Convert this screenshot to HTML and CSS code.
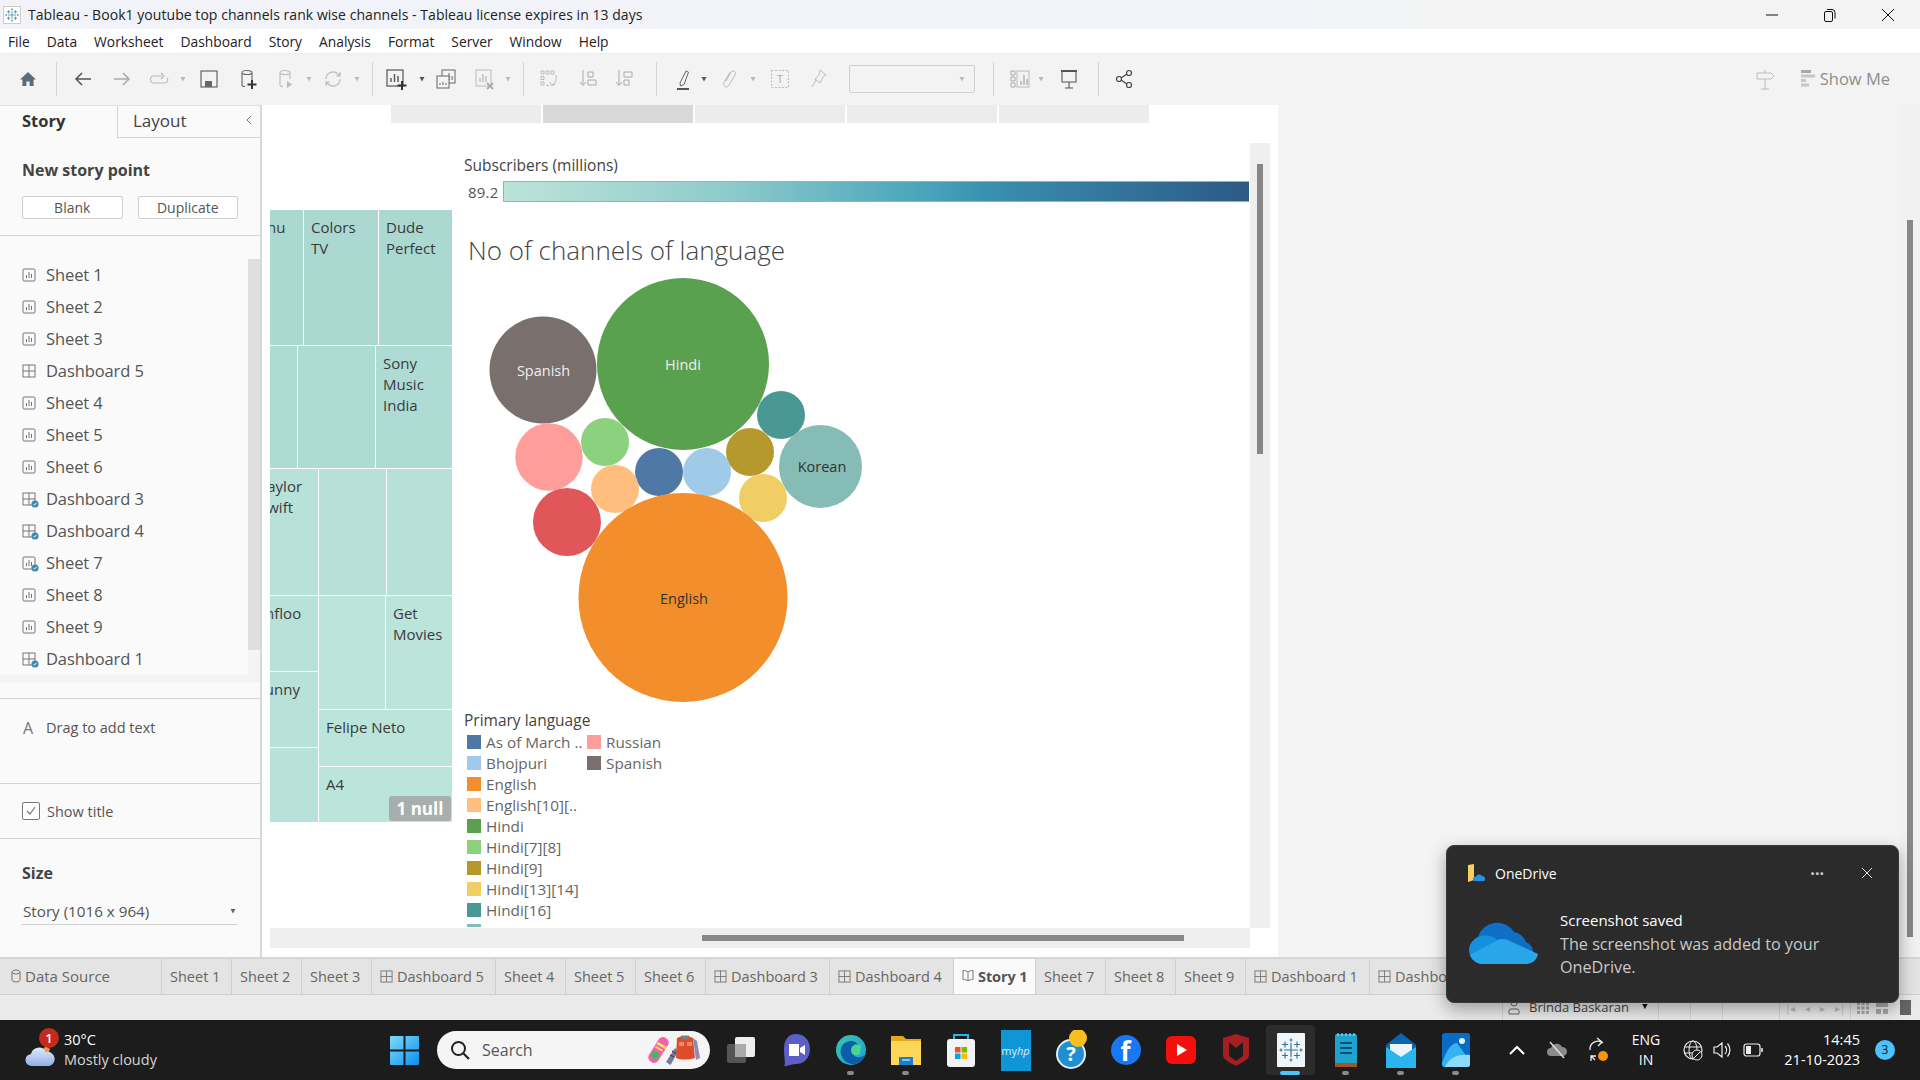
FILE: index.html
```html
<!DOCTYPE html>
<html lang="en">
<head>
  <meta charset="UTF-8">
  <title>Tableau - Book1 youtube top channels rank wise channels</title>
  <link rel="stylesheet" href="styles.css">
</head>
<body>
  <svg class="defs" width="0" height="0">
    <symbol id="i-sheet" viewBox="0 0 14 14"><rect x="1" y="1" width="12" height="12" rx="1" fill="none" stroke="#777"/><path d="M4.5 10V7M7 10V4M9.5 10V6" stroke="#777" fill="none"/></symbol>
    <symbol id="i-dash" viewBox="0 0 14 14"><rect x="1" y="1" width="12" height="12" fill="none" stroke="#777"/><path d="M7 1v12M1 7h12" stroke="#777"/></symbol>
    <symbol id="i-ok" viewBox="0 0 8 8"><circle cx="4" cy="4" r="3.6" fill="#3f87ab"/><path d="M2.3 4l1.2 1.2 2.2-2.4" stroke="#fff" fill="none"/></symbol>
    <symbol id="i-tableau" viewBox="0 0 28 28"><path d="M14 7v14M7 14h14M14 2.500v3M12.500 4h3M14 22.500v3M12.500 24h3M2.500 14h3M4 12.500v3M22.500 14h3M24 12.500v3M8 5.500v6M5 8.500h6M20 5.500v6M17 8.500h6M8 16.500v6M5 19.500h6M20 16.500v6M17 19.500h6" stroke="#35759c" stroke-width="1.200" fill="none"/></symbol>
  </svg>

  <div class="app">
    <div class="titlebar">
      <svg class="app-icon" width="18" height="18" viewBox="0 0 18 18"><rect x=".5" y=".5" width="17" height="17" fill="#fff" stroke="#ccc"/><svg x="1" y="1" width="16" height="16"><use href="#i-tableau"/></svg></svg>
      <span class="title-text">Tableau - Book1 youtube top channels rank wise channels - Tableau license expires in 13 days</span>
      <div class="win-btns">
        <svg width="14" height="14" viewBox="0 0 14 14"><path d="M1 7h12" stroke="#111"/></svg>
        <svg width="14" height="14" viewBox="0 0 14 14"><rect x="1.5" y="3.5" width="8" height="10" rx="1.5" fill="none" stroke="#111"/><path d="M4 1.5h5a3 3 0 0 1 3 3v6" fill="none" stroke="#111"/></svg>
        <svg width="14" height="14" viewBox="0 0 14 14"><path d="M1 1l12 12M13 1L1 13" stroke="#111"/></svg>
      </div>
    </div>

    <div class="menubar">
      <span>File</span><span>Data</span><span>Worksheet</span><span>Dashboard</span><span>Story</span><span>Analysis</span><span>Format</span><span>Server</span><span>Window</span><span>Help</span>
    </div>

    <div class="toolbar">
      <svg class="tb m16" viewBox="0 0 24 24"><path d="M12 5L4 12.5h2.4V19h4v-4.5h3.200V19h4v-6.500H20z" fill="#5c6b7a"/></svg>
      <i class="sep m16"></i>
      <svg class="tb m14" viewBox="0 0 24 24"><path d="M20 12H5M11 6l-6 6 6 6" stroke="#555" stroke-width="1.500" fill="none"/></svg>
      <svg class="tb m15" viewBox="0 0 24 24"><path d="M4 12h15M13 6l6 6-6 6" stroke="#aaa" stroke-width="1.500" fill="none"/></svg>
      <svg class="tb m13" viewBox="0 0 24 24"><path d="M15 9H7a3.500 3.500 0 0 0 0 7h11a3 3 0 0 0 2-5M14 6l3 3-3 3" stroke="#bbb" stroke-width="1.200" fill="none"/></svg>
      <i class="dd light m8"></i>
      <svg class="tb m10" viewBox="0 0 24 24"><rect x="4" y="4" width="16" height="16" fill="none" stroke="#666" stroke-width="1.200"/><rect x="8" y="14" width="7" height="6" fill="#666"/></svg>
      <svg class="tb m15" viewBox="0 0 24 24"><path d="M6 5.500a5 2 0 0 1 10 0V15M6 5.500V18c0 1 1.500 1.500 3 1.500M6 5.500a5 2 0 0 0 10 0" stroke="#666" stroke-width="1.100" fill="none"/><path d="M16 13v9M11.500 17.500h9" stroke="#333" stroke-width="2"/></svg>
      <svg class="tb m14" viewBox="0 0 24 24"><path d="M6 5.500a5 2 0 0 1 10 0V12M6 5.500V18c0 1 1.500 1.500 3 1.500M6 5.500a5 2 0 0 0 10 0" stroke="#bbb" stroke-width="1.100" fill="none"/><path d="M13 14v7l5-3.500z" fill="#bbb"/></svg>
      <i class="dd light m7"></i>
      <svg class="tb m8" viewBox="0 0 24 24"><path d="M5 12a7 7 0 0 1 12-5l2 2M19 12a7 7 0 0 1-12 5l-2-2M19 5v4h-4M5 19v-4h4" stroke="#bbb" stroke-width="1.200" fill="none"/></svg>
      <i class="dd light m8"></i>
      <i class="sep m11"></i>
      <svg class="tb m11" viewBox="0 0 24 24"><rect x="3" y="3" width="16" height="16" fill="none" stroke="#555" stroke-width="1.200"/><path d="M7 15v-4M10.500 15V7M14 15v-6" stroke="#555" stroke-width="1.400"/><path d="M18 14v9M13.500 18.500h9" stroke="#333" stroke-width="2"/></svg>
      <i class="dd m10"></i>
      <svg class="tb m8" viewBox="0 0 24 24"><rect x="8" y="3" width="13" height="13" fill="#f3f3f3" stroke="#666"/><path d="M12 13v-3M15 13V6M18 13V9" stroke="#666"/><rect x="3" y="9" width="12" height="12" fill="#f3f3f3" stroke="#666"/><path d="M6 18v-2M9 18v-3M12 18v-2" stroke="#666"/></svg>
      <svg class="tb m14" viewBox="0 0 24 24"><rect x="4" y="3" width="15" height="16" fill="none" stroke="#bbb"/><path d="M8 15v-4M11 15V7M14 15v-6" stroke="#bbb" stroke-width="1.300"/><path d="M15 16l6 6M21 16l-6 6" stroke="#aaa" stroke-width="1.800"/></svg>
      <i class="dd light m8"></i>
      <i class="sep m11"></i>
      <svg class="tb m13" viewBox="0 0 24 24"><path d="M4 4h3v3H4zM9 4h3v3H9zM14 4h3v3h-3zM4 9.500h3v3H4zM4 15h3v3H4zM9 18.500h3M19 8v5a6 6 0 0 1-4 5M13 15l1.500 3.500 3.500-1" stroke="#bbb" fill="none"/></svg>
      <svg class="tb m15" viewBox="0 0 24 24"><path d="M7 3v15M4 15l3 3.500 3-3.500M12 5h5v5h-5zM12 13h8v5h-8z" stroke="#aaa" fill="none"/></svg>
      <svg class="tb m12" viewBox="0 0 24 24"><path d="M7 3v15M4 15l3 3.500 3-3.500M12 5h8v5h-8zM12 13h5v5h-5z" stroke="#aaa" fill="none"/></svg>
      <i class="sep m20"></i>
      <svg class="tb m14" viewBox="0 0 24 24"><path d="M9 16l6-12 2.500 1.200-4.500 12.300-3.500 1.500z" fill="none" stroke="#666"/><path d="M6 22h12" stroke="#555" stroke-width="2"/></svg>
      <i class="dd m5"></i>
      <svg class="tb m9" viewBox="0 0 24 24"><path d="M9 14l5-9a2.500 2.500 0 0 1 4.300 2.500l-6.500 11a2.800 2.800 0 0 1-5-2.500l6-10.500" fill="none" stroke="#bbb"/></svg>
      <i class="dd light m8"></i>
      <svg class="tb m11" viewBox="0 0 24 24"><rect x="3.500" y="3.500" width="17" height="17" fill="none" stroke="#bbb" stroke-dasharray="2 1.500"/><text x="12" y="16" text-anchor="middle" class="tb-t">T</text></svg>
      <svg class="tb m14" viewBox="0 0 24 24"><path d="M14 3l6 5-3 2-3 6-5-4 4-4zM10 13l-4 7" fill="none" stroke="#bbb"/></svg>
      <div class="combo m19"><i class="dd light"></i></div>
      <i class="sep m18"></i>
      <svg class="tb m14" viewBox="0 0 24 24"><rect x="9" y="4" width="12" height="16" fill="none" stroke="#bbb"/><path d="M13 18v-4M16 18V8M19 18v-6" stroke="#aaa" stroke-width="1.300"/><path d="M3 4h4v4H3zM3 10h4v4H3zM3 16h4v4H3z" fill="none" stroke="#aaa"/></svg>
      <i class="dd light m5"></i>
      <svg class="tb m12" viewBox="0 0 24 24"><path d="M4 4h16" stroke="#555" stroke-width="2"/><path d="M5 5v10h14V5M12 15v6M8 21h8" stroke="#555" fill="none" stroke-width="1.100"/></svg>
      <i class="sep m17"></i>
      <svg class="tb m13" viewBox="0 0 24 24"><circle cx="17" cy="6" r="2.500" fill="none" stroke="#444" stroke-width="1.200"/><circle cx="7" cy="12" r="2.500" fill="none" stroke="#444" stroke-width="1.200"/><circle cx="17" cy="18" r="2.500" fill="none" stroke="#444" stroke-width="1.200"/><path d="M9 11l6-4M9 13l6 4" stroke="#444" stroke-width="1.200"/></svg>
      <div class="showme">
        <svg width="24" height="24" viewBox="0 0 24 24"><path d="M4 6h14l3 3-3 3H4zM12 3v3M12 12v10M8 22h8" fill="none" stroke="#bbb"/></svg>
        <svg class="showme-bars" width="14" height="20" viewBox="0 0 14 20"><path d="M0 1h10v3H0z" fill="#aaa"/><path d="M0 5.500h14v3H0zM0 10h5v3H0zM0 14.500h8v3H0z" fill="#c6c6c6"/></svg>
        <span>Show Me</span>
      </div>
    </div>

    <div class="main">
      <aside class="side">
        <div class="side-tabs">
          <div class="side-tab on">Story</div>
          <div class="side-tab">Layout<svg class="chev" width="8" height="10" viewBox="0 0 8 10"><path d="M6 1L2 5l4 4" fill="none" stroke="#777"/></svg></div>
        </div>
        <div class="new-point">
          <h3>New story point</h3>
          <div class="new-btns"><button>Blank</button><button>Duplicate</button></div>
        </div>
        <div class="sheet-wrap">
          <ul class="sheets">
            <li><svg class="ico"><use href="#i-sheet"/></svg>Sheet 1</li>
            <li><svg class="ico"><use href="#i-sheet"/></svg>Sheet 2</li>
            <li><svg class="ico"><use href="#i-sheet"/></svg>Sheet 3</li>
            <li><svg class="ico"><use href="#i-dash"/></svg>Dashboard 5</li>
            <li><svg class="ico"><use href="#i-sheet"/></svg>Sheet 4</li>
            <li><svg class="ico"><use href="#i-sheet"/></svg>Sheet 5</li>
            <li><svg class="ico"><use href="#i-sheet"/></svg>Sheet 6</li>
            <li><svg class="ico"><use href="#i-dash"/></svg><svg class="ok"><use href="#i-ok"/></svg>Dashboard 3</li>
            <li><svg class="ico"><use href="#i-dash"/></svg><svg class="ok"><use href="#i-ok"/></svg>Dashboard 4</li>
            <li><svg class="ico"><use href="#i-sheet"/></svg><svg class="ok"><use href="#i-ok"/></svg>Sheet 7</li>
            <li><svg class="ico"><use href="#i-sheet"/></svg>Sheet 8</li>
            <li><svg class="ico"><use href="#i-sheet"/></svg>Sheet 9</li>
            <li><svg class="ico"><use href="#i-dash"/></svg><svg class="ok"><use href="#i-ok"/></svg>Dashboard 1</li>
          </ul>
          <div class="sheet-track"><div class="sheet-thumb"></div></div>
        </div>
        <div class="side-sec drag"><b>A</b>Drag to add text</div>
        <div class="side-sec showtitle">
          <svg width="18" height="18" viewBox="0 0 18 18"><rect x=".5" y=".5" width="17" height="17" rx="1.500" fill="#fff" stroke="#777"/><path d="M5 9l3 3 5-7" fill="none" stroke="#777" stroke-width="1.200"/></svg>
          Show title
        </div>
        <div class="size">
          <h3>Size</h3>
          <div class="size-sel">Story (1016 x 964)<i class="dd dark"></i></div>
        </div>
      </aside>

      <section class="canvas">
        <div class="points"><div></div><div class="cur"></div><div></div><div></div><div></div></div>
        <div class="scroller">
          <div class="view">
            <div class="tree">
              <div class="t-row r1">
                <div class="cell c1a"><span class="cut cut-nu">Vishnu</span></div>
                <div class="cell c1b">Colors<br>TV</div>
                <div class="cell c1c">Dude<br>Perfect</div>
              </div>
              <div class="t-row r2">
                <div class="cell c2a"></div>
                <div class="cell c2b"></div>
                <div class="cell c2c">Sony<br>Music<br>India</div>
              </div>
              <div class="t-row r3">
                <div class="t-col left">
                  <div class="cell l1"><span class="cut cut-ta">Taylor<br>Swift</span></div>
                  <div class="cell l2"><span class="cut cut-nf">Ninfloo</span></div>
                  <div class="cell l3"><span class="cut cut-un">Bad Bunny</span></div>
                  <div class="cell l4"></div>
                </div>
                <div class="t-col rest">
                  <div class="t-row m1"><div class="cell m1a"></div><div class="cell m1b"></div></div>
                  <div class="t-row m2"><div class="cell m2a"></div><div class="cell m2b">Get<br>Movies</div></div>
                  <div class="cell m3">Felipe Neto</div>
                  <div class="cell m4">A4<div class="nulls">1 null</div></div>
                </div>
              </div>
            </div>

            <div class="charts">
              <div class="color-leg">
                <div class="leg-title">Subscribers (millions)</div>
                <div class="color-row"><span>89.2</span><div class="ramp"></div></div>
              </div>
              <h2 class="chart-title">No of channels of language</h2>
              <svg class="bubbles" width="420" height="440" viewBox="464 270 420 440">
                <circle cx="683" cy="364" r="86" fill="#59a14f"/>
                <circle cx="543" cy="370" r="53.500" fill="#79706e"/>
                <circle cx="549" cy="457" r="33.700" fill="#ff9d9a"/>
                <circle cx="605" cy="442" r="24" fill="#8cd17d"/>
                <circle cx="781" cy="415" r="24" fill="#499894"/>
                <circle cx="820.500" cy="466.500" r="41.500" fill="#86bcb6"/>
                <circle cx="750" cy="452" r="24" fill="#b6992d"/>
                <circle cx="763" cy="498" r="24" fill="#f1ce63"/>
                <circle cx="659" cy="472" r="24" fill="#4e79a7"/>
                <circle cx="707" cy="472" r="24" fill="#a0cbe8"/>
                <circle cx="615" cy="489" r="24" fill="#ffbe7d"/>
                <circle cx="567" cy="522" r="34" fill="#e15759"/>
                <circle cx="683" cy="597.500" r="104.500" fill="#f28e2b"/>
                <text x="683" y="370" class="lbl lt">Hindi</text>
                <text x="543.500" y="376" class="lbl lt">Spanish</text>
                <text x="684" y="604" class="lbl">English</text>
                <text x="822" y="472" class="lbl">Korean</text>
              </svg>
              <div class="leg-title lang-title">Primary language</div>
              <div class="lang-leg">
                <div class="lang-col">
                  <div class="lang"><i class="c-blue"></i>As of March ..</div>
                  <div class="lang"><i class="c-sky"></i>Bhojpuri</div>
                  <div class="lang"><i class="c-orange"></i>English</div>
                  <div class="lang"><i class="c-peach"></i>English[10][..</div>
                  <div class="lang"><i class="c-green"></i>Hindi</div>
                  <div class="lang"><i class="c-lime"></i>Hindi[7][8]</div>
                  <div class="lang"><i class="c-olive"></i>Hindi[9]</div>
                  <div class="lang"><i class="c-yellow"></i>Hindi[13][14]</div>
                  <div class="lang"><i class="c-teal"></i>Hindi[16]</div>
                  <div class="lang"><i class="c-korean"></i>Korean</div>
                </div>
                <div class="lang-col">
                  <div class="lang"><i class="c-pink"></i>Russian</div>
                  <div class="lang"><i class="c-grey"></i>Spanish</div>
                </div>
              </div>
            </div>
          </div>
          <div class="vscroll"><div class="vthumb"></div></div>
          <div class="hscroll"><div class="hthumb"></div></div>
        </div>
      </section>

      <div class="outside"><div class="page-track"><div class="page-thumb"></div></div></div>
    </div>

    <div class="tabs">
      <div class="tab t-src"><svg width="10" height="14" viewBox="0 0 10 14"><path d="M1 3a4 2 0 0 1 8 0v8a4 2 0 0 1-8 0zM1 3a4 2 0 0 0 8 0" fill="none" stroke="#777"/></svg>Data Source</div>
      <div class="tab t-s">Sheet 1</div>
      <div class="tab t-s">Sheet 2</div>
      <div class="tab t-s">Sheet 3</div>
      <div class="tab t-d"><svg class="ico-s"><use href="#i-dash"/></svg>Dashboard 5</div>
      <div class="tab t-s">Sheet 4</div>
      <div class="tab t-s">Sheet 5</div>
      <div class="tab t-s">Sheet 6</div>
      <div class="tab t-d"><svg class="ico-s"><use href="#i-dash"/></svg>Dashboard 3</div>
      <div class="tab t-d"><svg class="ico-s"><use href="#i-dash"/></svg>Dashboard 4</div>
      <div class="tab t-story"><svg width="12" height="14" viewBox="0 0 12 14"><path d="M1 1.500c2 0 4 .5 5 1.500 1-1 3-1.500 5-1.500v9c-2 0-4 .5-5 1.500-1-1-3-1.500-5-1.500zM6 3v9" fill="none" stroke="#777"/></svg>Story 1</div>
      <div class="tab t-s">Sheet 7</div>
      <div class="tab t-s">Sheet 8</div>
      <div class="tab t-s">Sheet 9</div>
      <div class="tab t-d"><svg class="ico-s"><use href="#i-dash"/></svg>Dashboard 1</div>
      <div class="tab t-d"><svg class="ico-s"><use href="#i-dash"/></svg>Dashboard 2</div>
    </div>

    <div class="status">
      <div class="st-user"><svg width="12" height="16" viewBox="0 0 12 16"><circle cx="6" cy="4" r="3" fill="none" stroke="#666"/><path d="M1 15v-3a2 2 0 0 1 2-2h6a2 2 0 0 1 2 2v3z" fill="none" stroke="#666"/></svg>Brinda Baskaran<i class="dd black"></i></div>
      <div class="st-cell c32"></div>
      <div class="st-cell c32"></div>
      <div class="st-cell c57"></div>
      <div class="st-nav"><span>|◂</span><span>◂</span><span>▸</span><span>▸|</span></div>
      <div class="st-views">
        <svg width="12" height="12" viewBox="0 0 12 12"><path d="M0 0h3v3H0zM4.500 0h3v3h-3zM9 0h3v3H9zM0 4.500h3v3H0zM4.500 4.500h3v3h-3zM9 4.500h3v3H9zM0 9h3v3H0zM4.500 9h3v3h-3zM9 9h3v3H9z" fill="#aaa"/></svg>
        <svg width="12" height="12" viewBox="0 0 12 12"><path d="M0 0h12v5H0zM0 7h5v5H0zM7 7h5v5H7z" fill="#aaa"/></svg>
        <div class="view-solid"></div>
      </div>
    </div>

    <div class="taskbar">
      <div class="weather">
        <svg width="30" height="24" viewBox="0 0 30 24" class="w-cloud"><defs><linearGradient id="wc" x1="0" y1="0" x2="0" y2="1"><stop offset="0" stop-color="#dfe9fa"/><stop offset="1" stop-color="#8fb0e8"/></linearGradient></defs><path d="M18 6l3-3 4 3-2 5z" fill="#f29a2e"/><path d="M7 23a6 6 0 0 1-1-12 8 8 0 0 1 15-2 6.500 6.500 0 0 1 3 14z" fill="url(#wc)"/></svg>
        <span class="w-badge">1</span>
        <div class="w-text"><div>30°C</div><div class="w-sub">Mostly cloudy</div></div>
      </div>
      <svg class="win" width="29" height="29" viewBox="0 0 29 29"><defs><linearGradient id="wl" x1="0" y1="0" x2="1" y2="1"><stop offset="0" stop-color="#7bdcfb"/><stop offset="1" stop-color="#0f8ef0"/></linearGradient></defs><path d="M0 1a1 1 0 0 1 1-1h12.500v13.500H0zM15.500 0H28a1 1 0 0 1 1 1v12.500H15.500zM0 15.500h13.500V29H1a1 1 0 0 1-1-1zM15.500 15.500H29V28a1 1 0 0 1-1 1H15.500z" fill="url(#wl)"/></svg>
      <div class="search">
        <svg width="22" height="22" viewBox="0 0 22 22"><circle cx="9.500" cy="9.500" r="6.500" fill="none" stroke="#222" stroke-width="2"/><path d="M14.500 14.500L20 20" stroke="#222" stroke-width="2.200"/></svg>
        <span>Search</span>
        <svg class="promo" width="56" height="34" viewBox="0 0 56 34">
          <rect x="7" y="3" width="11" height="28" rx="5" transform="rotate(32 12.500 17)" fill="#f45fb0"/>
          <path d="M12 9l9 5-1.500 2.200-9-5zM10 13l7 4-1 1.600-7-4z" fill="#f5e35f"/>
          <circle cx="9" cy="22" r="3.800" fill="#35c25a"/>
          <path d="M20 29l9-14 3.500 3-8 14z" fill="#75799b"/>
          <path d="M24 22l4 2M26 18l4 2.500" stroke="#3e4160" stroke-width="1.200"/>
          <path d="M31 5l5-2h6l5 2 2 20c-6 2-14 2-19 0z" fill="#dc4d2b"/>
          <path d="M35 2.500h8l-1.500 4h-5z" fill="#76808f"/>
          <path d="M33 9h5v4h-5zM41 9h5v4h-5z" fill="#f08a5a"/>
          <path d="M47 5l4 3 3 17-4 2z" fill="#8a8fb0"/>
        </svg>
      </div>

      <div class="apps">
        <div class="app-i"><svg width="32" height="32" viewBox="0 0 32 32"><rect x="2" y="10" width="19" height="19" rx="2" fill="#555"/><rect x="10" y="3" width="20" height="20" rx="2" fill="#eee"/><rect x="10" y="10" width="11" height="13" fill="#aaa"/></svg></div>
        <div class="app-i"><svg width="30" height="34" viewBox="0 0 30 34"><path d="M15 1c8 0 14 6 14 15s-6 15-14 15c-3 0-8 2-12 2 2-2 0-8 0-17C3 7 7 1 15 1z" fill="#5b5fc7"/><path d="M8 11h10v12H8zM19 15l5-3v10l-5-3z" fill="#fff"/></svg></div>
        <div class="app-i dot"><svg width="32" height="34" viewBox="0 0 32 34"><defs><linearGradient id="eg" x1="0" y1="0" x2="1" y2="1"><stop offset="0" stop-color="#36c7a8"/><stop offset="1" stop-color="#1b9de2"/></linearGradient></defs><circle cx="16" cy="17" r="15" fill="url(#eg)"/><path d="M31 18c0 5-5 7-9 6-4-1-6-5-4-9 1-2 4-3 5-3-2-4-7-5-11-3C6 11 4 18 7 24c3 7 12 9 18 5 3-2 5-6 6-11z" fill="#0d5ca8"/><path d="M25 21c-4 3-9 1-9-4s6-7 10-4" fill="#4ad48f"/></svg></div>
        <div class="app-i dot"><svg width="30" height="34" viewBox="0 0 30 34"><path d="M0 3h12l3 3h15v26H0z" fill="#e6a817"/><path d="M0 8h30v24H0z" fill="#fdd75a"/><path d="M8 24h14v8H8z" fill="#1a7fc9"/><path d="M11 27h8" stroke="#fff"/></svg></div>
        <div class="app-i"><svg width="30" height="36" viewBox="0 0 30 36"><path d="M8 8V3h14v5" fill="none" stroke="#2ab4e6" stroke-width="2"/><rect x="1" y="7" width="28" height="28" rx="3" fill="#f4f4f4"/><path d="M9 15h5.500v5.500H9z" fill="#f25022"/><path d="M15.500 15H21v5.500h-5.500z" fill="#7fba00"/><path d="M9 21.500h5.500V27H9z" fill="#00a4ef"/><path d="M15.500 21.500H21V27h-5.500z" fill="#ffb900"/></svg></div>
        <div class="app-i"><div class="myhp">my<em>hp</em></div></div>
        <div class="app-i"><svg class="help" width="34" height="40" viewBox="0 0 34 40"><circle cx="15" cy="24" r="14" fill="#1e8fd0" stroke="#dfeef7" stroke-width="2"/><text x="15" y="31" text-anchor="middle" class="help-q">?</text><circle cx="22" cy="8" r="9" fill="#f9bf1c"/></svg></div>
        <div class="app-i"><div class="fb">f</div></div>
        <div class="app-i"><svg width="32" height="30" viewBox="0 0 32 30"><rect x="1" y="1" width="30" height="28" rx="6" fill="#f40f0f"/><path d="M12 9l10 6-10 6z" fill="#fff"/></svg></div>
        <div class="app-i"><svg width="28" height="34" viewBox="0 0 28 34"><path d="M1 5l13-4 13 4v17c0 5-8 8-13 11C9 30 1 27 1 22z" fill="#a41e22"/><path d="M7 9l7 6 7-6v14l-7 5-7-5z" fill="#1c1c1c"/></svg></div>
        <div class="app-i active"><svg width="28" height="34" viewBox="0 0 28 34"><rect width="28" height="34" rx="1" fill="#f3f6f8"/><svg y="3" width="28" height="28"><use href="#i-tableau"/></svg></svg></div>
        <div class="app-i dot"><svg width="24" height="36" viewBox="0 0 24 36"><rect x="1" y="2" width="22" height="32" rx="2" fill="#1da3cc"/><path d="M1 31h22v4H1z" fill="#a4541e"/><path d="M4 1v3M8 1v3M12 1v3M16 1v3M20 1v3" stroke="#bfe6f2"/><path d="M6 11h12M6 16h12M6 21h12" stroke="#0b4f78" stroke-width="2"/></svg></div>
        <div class="app-i dot"><svg width="30" height="36" viewBox="0 0 30 36"><path d="M0 13L15 1l15 12v22H0z" fill="#0a64b4"/><path d="M4 12h22v14H4z" fill="#e9f4fb"/><path d="M0 15l15 10 15-10v21H0z" fill="#29b6ef"/></svg></div>
        <div class="app-i dot"><svg width="28" height="34" viewBox="0 0 28 34"><rect width="28" height="34" rx="3" fill="#0a6bc4"/><circle cx="20" cy="8" r="3" fill="#e6f3fc"/><path d="M0 30c5-14 10-20 15-20l13 18v3a3 3 0 0 1-3 3H3a3 3 0 0 1-3-3z" fill="#35b2f0"/><path d="M3 34c4-8 10-13 25-12v9a3 3 0 0 1-3 3z" fill="#8bdcfa"/></svg></div>
      </div>

      <div class="tray">
        <svg class="t-chev" width="20" height="14" viewBox="0 0 20 14"><path d="M3 11l7-7 7 7" fill="none" stroke="#fff" stroke-width="2"/></svg>
        <svg class="t-cloud" width="20" height="18" viewBox="0 0 20 18"><path d="M4 15a4 4 0 0 1 0-8 6 6 0 0 1 11-1 4.500 4.500 0 0 1 1 9z" fill="#8a8a8a"/><path d="M3 1l14 16" stroke="#ddd" stroke-width="1.500"/></svg>
        <svg class="t-sync" width="22" height="26" viewBox="0 0 22 26"><path d="M2 13a8 8 0 0 1 13-7M9 1l5 4-4 4" fill="none" stroke="#eee" stroke-width="1.300"/><path d="M3 19l4 4M3 24v-5h5" fill="none" stroke="#eee" stroke-width="1.300"/><circle cx="15" cy="19" r="5" fill="#f7940c"/></svg>
        <div class="t-lang"><div>ENG</div><div>IN</div></div>
        <svg class="t-globe" width="20" height="22" viewBox="0 0 20 22"><circle cx="10" cy="11" r="9" fill="none" stroke="#eee" stroke-width="1.200"/><ellipse cx="10" cy="11" rx="4" ry="9" fill="none" stroke="#eee"/><path d="M1.500 8h17M1.500 14h17" stroke="#eee"/><circle cx="14" cy="16" r="5" fill="#1c1c1c" stroke="#eee"/><path d="M11 19l6-6" stroke="#eee"/></svg>
        <svg class="t-spk" width="20" height="20" viewBox="0 0 20 20"><path d="M2 7h3l5-4v14l-5-4H2zM13 6a6 6 0 0 1 0 8M15.500 3.500a10 10 0 0 1 0 13" fill="none" stroke="#eee" stroke-width="1.200"/></svg>
        <svg class="t-bat" width="20" height="14" viewBox="0 0 20 14"><rect x="1" y="1" width="16" height="12" rx="2.500" fill="none" stroke="#eee" stroke-width="1.200"/><rect x="3" y="3" width="5" height="8" fill="#eee"/><path d="M19 5v4" stroke="#eee" stroke-width="1.500"/></svg>
        <div class="t-clock"><div>14:45</div><div>21-10-2023</div></div>
        <div class="t-notif">3</div>
      </div>
    </div>

    <div class="toast">
      <div class="toast-head">
        <svg width="17" height="18" viewBox="0 0 17 18"><path d="M0 1l6-1v16l-6 2z" fill="#f6cf5f"/><path d="M6 17h10a1 1 0 0 0 1-1 3 3 0 0 0-3-4 3.500 3.500 0 0 0-6 .5A2.500 2.500 0 0 0 6 17z" fill="#2792e0"/></svg>
        <span class="toast-app">OneDrive</span>
        <span class="toast-more">···</span>
        <svg width="12" height="12" viewBox="0 0 12 12"><path d="M1 1l10 10M11 1L1 11" stroke="#ddd"/></svg>
      </div>
      <div class="toast-body">
        <svg width="70" height="46" viewBox="0 0 70 46"><path d="M15 44a14 14 0 0 1-5-27 20 20 0 0 1 36-5 16 16 0 0 1 12 10A12 12 0 0 1 58 44z" fill="#0f6fc6"/><path d="M15 44A14 14 0 0 1 10 17c8-3 14-1 20 3l20 15-8 9z" fill="#1490df"/><path d="M58 44H16c-6 0-12-3-14-9l26-14c4-3 10-2 14 0l28 13c-1 6-6 10-12 10z" fill="#29a6ea"/></svg>
        <div class="toast-text">
          <div class="toast-h">Screenshot saved</div>
          <div>The screenshot was added to your<br>OneDrive.</div>
        </div>
      </div>
    </div>
  </div>
</body>
</html>
```

FILE: styles.css
```css
* {
  box-sizing: border-box;
}

body {
  margin: 0;
  font-family: "Open Sans", "Noto Sans", sans-serif;
  color: #333;
  overflow: hidden;
}

.defs {
  position: absolute;
}

.app {
  position: relative;
  width: 1920px;
  height: 1080px;
  display: flex;
  flex-direction: column;
  overflow: hidden;
}

/* title and menu */
.titlebar {
  height: 29px;
  display: flex;
  align-items: center;
  background: linear-gradient(90deg, #f1f3f8 0%, #f1f3f8 68%, #f3f3f3 75%);
  font-size: 14px;
  color: #222;
}

.app-icon {
  margin: 0 7px 0 3px;
}

.title-text {
  letter-spacing: .05px;
}

.win-btns {
  margin-left: auto;
  display: flex;
  gap: 44px;
  margin-right: 25px;
}

.menubar {
  height: 25px;
  display: flex;
  align-items: center;
  gap: 17px;
  padding: 1px 0 0 8px;
  background: #fff;
  font-size: 13.800px;
  color: #222;
  border-bottom: 1px solid #ececec;
}

/* toolbar */
.toolbar {
  height: 51px;
  display: flex;
  align-items: center;
  background: #f3f3f3;
  padding-bottom: 1px;
}

.tb {
  width: 24px;
  height: 24px;
  flex: none;
}

.tb-t {
  font-size: 11px;
  fill: #aaa;
}

.sep {
  width: 1px;
  height: 34px;
  background: #d4d4d4;
  flex: none;
}

.dd {
  width: 8px;
  height: 5px;
  flex: none;
  background: #555;
  clip-path: polygon(15% 0, 85% 0, 50% 100%);
}

.dd.light {
  background: #bbb;
}

.dd.dark {
  background: #666;
}

.dd.black {
  background: #111;
}

.m5 { margin-left: 5px; }
.m7 { margin-left: 7px; }
.m8 { margin-left: 8px; }
.m9 { margin-left: 9px; }
.m10 { margin-left: 10px; }
.m11 { margin-left: 11px; }
.m12 { margin-left: 12px; }
.m13 { margin-left: 13px; }
.m14 { margin-left: 14px; }
.m15 { margin-left: 15px; }
.m16 { margin-left: 16px; }
.m17 { margin-left: 17px; }
.m18 { margin-left: 18px; }
.m19 { margin-left: 19px; }
.m20 { margin-left: 20px; }

.combo {
  width: 126px;
  height: 28px;
  border: 1px solid #d0d0d0;
  border-radius: 2px;
  display: flex;
  align-items: center;
  justify-content: flex-end;
  padding-right: 8px;
}

.showme {
  margin-left: auto;
  margin-right: 30px;
  display: flex;
  align-items: center;
  color: #8e8e8e;
  font-size: 16.500px;
}

.showme span {
  margin-top: -2px;
}

.showme-bars {
  margin: 0 5px 0 24px;
}

/* main row */
.main {
  height: 852px;
  display: flex;
  background: #f4f4f4;
}

.side {
  width: 262px;
  flex: none;
  background: #fafafa;
  border-right: 2px solid #d8d8d8;
  font-size: 16px;
  color: #555;
}

.side-tabs {
  height: 33px;
  display: flex;
  border-top: 1px solid #e2e2e2;
}

.side-tab {
  position: relative;
  width: 117px;
  padding-left: 22px;
  line-height: 30px;
  font-size: 16.500px;
  font-weight: 700;
  color: #333;
}

.side-tab + .side-tab {
  flex: 1;
  padding-left: 15px;
  font-size: 17px;
  font-weight: 400;
  color: #444;
  border-left: 1px solid #d4d4d4;
  border-bottom: 1px solid #d4d4d4;
}

.chev {
  position: absolute;
  right: 7px;
  top: 9px;
}

.new-point {
  height: 98px;
  padding: 22px 22px 0;
  border-bottom: 1px solid #d4d4d4;
}

.new-point h3,
.size h3 {
  margin: 0;
  font-size: 16px;
  line-height: 20px;
  color: #444;
}

.new-btns {
  margin-top: 16px;
  display: flex;
  gap: 15px;
}

.new-btns button {
  width: 102px;
  height: 23px;
  background: #fff;
  border: 1px solid #cfcfcf;
  border-radius: 2px;
  font-family: inherit;
  font-size: 14px;
  color: #555;
  padding: 0;
}

.sheet-wrap {
  margin-top: 23px;
  display: flex;
  height: 423px;
  background: #f4f4f4;
}

.sheets {
  list-style: none;
  margin: 0;
  padding: 0;
  width: 249px;
  height: 416px;
  background: #fafafa;
}

.sheets li {
  position: relative;
  height: 32px;
  display: flex;
  align-items: center;
  padding: 0 0 2px 46px;
  font-size: 16.500px;
  letter-spacing: -.1px;
}

.ico {
  position: absolute;
  left: 22px;
  top: 9px;
  width: 14px;
  height: 14px;
}

.ok {
  position: absolute;
  left: 31px;
  top: 17px;
  width: 8px;
  height: 8px;
}

.sheet-track {
  width: 12px;
}

.sheet-thumb {
  height: 391px;
  background: #dfdfdf;
}

.side-sec {
  border-top: 1px solid #d4d4d4;
}

.drag {
  margin-top: 16px;
  height: 85px;
  padding: 19px 0 0 46px;
  position: relative;
  font-size: 14.500px;
  line-height: 20px;
}

.drag b {
  position: absolute;
  left: 23px;
  top: 19px;
  font-weight: 400;
  font-size: 16px;
  color: #777;
}

.showtitle {
  height: 56px;
  display: flex;
  align-items: center;
  gap: 7px;
  padding-left: 22px;
  font-size: 14.500px;
  border-bottom: 1px solid #d4d4d4;
  padding-bottom: 0;
}

.size {
  padding: 24px 22px 0;
}

.size-sel {
  margin-top: 16px;
  height: 26px;
  display: flex;
  align-items: center;
  justify-content: space-between;
  padding: 0 1px 1px;
  border-bottom: 1px solid #cfcfcf;
  font-size: 15.200px;
}

/* dashboard canvas */
.canvas {
  width: 1016px;
  flex: none;
  background: #fff;
}

.points {
  height: 18px;
  display: flex;
  gap: 2px;
  padding-left: 129px;
}

.points div {
  width: 150px;
  background: #ececec;
}

.points .cur {
  background: #d9d9d9;
}

.scroller {
  display: grid;
  grid-template-columns: 988px 20px;
  grid-template-rows: 805px 20px;
}

.view {
  display: flex;
  padding-left: 8px;
  overflow: hidden;
}

.tree {
  margin-top: 87px;
  width: 182px;
  height: 612px;
  flex: none;
  overflow: hidden;
  display: flex;
  flex-direction: column;
  gap: 1px;
  font-size: 15px;
  line-height: 21px;
  color: #3a3a3a;
}

.t-row {
  display: flex;
  gap: 1px;
  flex: none;
}

.t-col {
  display: flex;
  flex-direction: column;
  gap: 1px;
}

.cell {
  overflow: hidden;
  padding: 7px 0 0 7px;
  white-space: nowrap;
}

.cut {
  display: block;
}

.cut-nu { margin-left: -32px; }
.cut-ta { margin-left: -11px; }
.cut-nf { margin-left: -20px; }
.cut-un { margin-left: -46px; }

.r1 { height: 135px; }
.r1 .cell { background: #abd9d2; }
.c1a { width: 33px; padding-left: 0; }
.c1b { width: 74px; }
.c1c { flex: 1; }

.r2 { height: 122px; }
.r2 .cell { background: #afdbd5; }
.c2a { width: 27px; }
.c2b { width: 77px; }
.c2c { flex: 1; }

.r3 { height: 353px; }
.left { width: 48px; }
.left .cell { background: #b8e2d9; padding-left: 0; }
.l1 { height: 126px; background: #b7e1d8; }
.l2 { height: 75px; }
.l3 { height: 75px; }
.l4 { flex: 1; }

.rest { flex: 1; }
.rest .cell { background: #bbe4da; }
.m1 { height: 126px; }
.m1 .cell { background: #b7e1d8; }
.m1a { width: 67px; }
.m1b { flex: 1; }
.m2 { height: 113px; }
.m2a { width: 66px; }
.m2b { flex: 1; }
.m3 { height: 56px; }
.m3, .m4 { padding-left: 7px; }
.m4 { flex: 1; position: relative; padding-top: 7px; }

.nulls {
  position: absolute;
  right: 1px;
  bottom: 1px;
  width: 62px;
  height: 25px;
  border-radius: 3px;
  background: #a8aeab;
  color: #fff;
  font-weight: 700;
  font-size: 17px;
  line-height: 25px;
  text-align: center;
}

.charts {
  margin-left: 12px;
  width: 785px;
  flex: none;
  display: flex;
  flex-direction: column;
}

.color-leg {
  margin-top: 32px;
}

.leg-title {
  font-size: 15.500px;
  line-height: 20px;
  color: #444;
}

.color-row {
  display: flex;
  align-items: center;
  margin-top: 6px;
  font-size: 15px;
  color: #555;
  letter-spacing: .2px;
}

.color-row span {
  width: 39px;
  padding-left: 4px;
}

.ramp {
  width: 746px;
  height: 21px;
  border: 1px solid #aaa;
  border-right: 0;
  background: linear-gradient(90deg, #bce4d8 0%, #8ecbcc 30%, #45a2b9 58%, #3a8fb0 65%, #2c5985 100%);
}

.chart-title {
  margin: 30px 0 0 4px;
  font-size: 26px;
  line-height: 36px;
  font-weight: 300;
  color: #444;
}

.bubbles {
  display: block;
  margin-top: 2px;
}

.lbl {
  font-size: 14.500px;
  text-anchor: middle;
  fill: #333;
}

.lbl.lt {
  fill: #eee;
}

.lang-title {
  margin-top: 0;
}

.lang-leg {
  margin-top: 1px;
  height: 195.500px;
  overflow: hidden;
  display: flex;
  padding-left: 3px;
}

.lang-col {
  width: 120px;
}

.lang {
  height: 21px;
  display: flex;
  align-items: center;
  font-size: 15.300px;
  color: #666;
  white-space: nowrap;
}

.lang i {
  width: 14px;
  height: 14px;
  margin-right: 5px;
  flex: none;
}

.c-blue { background: #4e79a7; }
.c-sky { background: #a0cbe8; }
.c-orange { background: #f28e2b; }
.c-peach { background: #ffbe7d; }
.c-green { background: #59a14f; }
.c-lime { background: #8cd17d; }
.c-olive { background: #b6992d; }
.c-yellow { background: #f1ce63; }
.c-teal { background: #499894; }
.c-korean { background: #86bcb6; }
.c-pink { background: #ff9d9a; }
.c-grey { background: #79706e; }

.vscroll {
  margin-top: 20px;
  background: #efefef;
  padding: 21px 7px 0;
}

.vthumb {
  height: 290px;
  background: #888;
}

.hscroll {
  margin-left: 8px;
  background: #efefef;
  padding: 7px 0 0 432px;
}

.hthumb {
  width: 482px;
  height: 6px;
  background: #888;
}

/* right of the canvas */
.outside {
  flex: 1;
  display: flex;
  justify-content: flex-end;
}

.page-track {
  width: 20px;
  background: #f1f1f1;
  padding: 115px 7px 0;
}

.page-thumb {
  height: 717px;
  background: #888;
}

/* sheet tabs */
.tabs {
  height: 38px;
  display: flex;
  align-items: stretch;
  background: #e4e4e4;
  border-top: 2px solid #d6d6d6;
  border-bottom: 1px solid #d0d0d0;
  font-size: 14.500px;
  color: #666;
  overflow: hidden;
}

.tab {
  flex: none;
  display: flex;
  align-items: center;
  gap: 4px;
  padding-left: 8px;
  border-right: 1px solid #cfcfcf;
  white-space: nowrap;
}

.t-src { width: 162px; padding: 0 0 1px 11px; font-size: 15px; }
.t-s { width: 70px; }
.t-d { width: 124px; }

.ico-s {
  width: 13px;
  height: 13px;
}

.t-story {
  width: 82px;
  background: #fafafa;
  font-weight: 700;
  color: #555;
  margin-top: -1px;
  letter-spacing: -.1px;
}

/* status bar */
.status {
  height: 25px;
  display: flex;
  justify-content: flex-end;
  background: #ebebeb;
  font-size: 13px;
  color: #444;
  padding-right: 6px;
}

.status > div {
  border-left: 1px solid #d4d4d4;
}

.st-user {
  width: 156px;
  display: flex;
  align-items: center;
  gap: 9px;
  padding: 0 0 2px 5px;
}

.st-user .dd {
  margin-left: 3px;
}

.c32 { width: 32px; }
.c57 { width: 57px; }

.st-nav {
  width: 71px;
  display: flex;
  align-items: center;
  justify-content: space-around;
  color: #bbb;
  font-size: 10px;
}

.st-views {
  width: 64px;
  display: flex;
  align-items: center;
  gap: 7px;
  padding-left: 6px;
}

.view-solid {
  width: 11px;
  height: 15px;
  margin-left: 5px;
  background: #666;
}

/* taskbar */
.taskbar {
  height: 60px;
  display: flex;
  align-items: center;
  background: #1c1c1c;
  color: #fff;
}

.weather {
  position: relative;
  width: 390px;
  height: 60px;
  flex: none;
  padding-left: 64px;
  display: flex;
  align-items: center;
}

.w-cloud {
  position: absolute;
  left: 25px;
  top: 23px;
}

.w-badge {
  position: absolute;
  left: 39px;
  top: 8px;
  width: 20px;
  height: 20px;
  border-radius: 50%;
  background: #c42b1c;
  font-size: 13px;
  font-weight: 600;
  line-height: 20px;
  text-align: center;
}

.w-text {
  font-size: 14.500px;
  line-height: 20px;
}

.w-sub {
  color: #d6d6d6;
}

.win {
  flex: none;
}

.search {
  margin-left: 18px;
  width: 273px;
  height: 38px;
  flex: none;
  display: flex;
  align-items: center;
  padding-left: 12px;
  gap: 11px;
  border-radius: 19px;
  background: #f5f5f5;
  color: #555;
  font-size: 16px;
}

.promo {
  margin-left: auto;
  margin-right: 8px;
}

.apps {
  margin-left: 3px;
  display: flex;
  flex: none;
}

.app-i {
  position: relative;
  width: 55px;
  height: 60px;
  display: flex;
  align-items: center;
  justify-content: center;
}

.app-i.active::before {
  content: "";
  position: absolute;
  left: 3px;
  right: 3px;
  top: 5px;
  bottom: 5px;
  border-radius: 4px;
  background: #2c2c2c;
}

.app-i.active svg {
  position: relative;
}

.app-i.active::after,
.app-i.dot::after {
  content: "";
  position: absolute;
  left: 24px;
  bottom: 5px;
  width: 7px;
  height: 4px;
  border-radius: 2px;
  background: #8a8a8a;
}

.app-i.active::after {
  left: 17px;
  width: 20px;
  background: #4cc2ff;
}

.myhp {
  width: 30px;
  height: 41px;
  background: #0f96d6;
  color: #d8f0fb;
  font-size: 11px;
  line-height: 41px;
  text-align: center;
}

.help {
  margin-left: 4px;
}

.help-q {
  font-size: 20px;
  font-weight: 700;
  fill: #fff;
}

.fb {
  width: 30px;
  height: 30px;
  border-radius: 50%;
  background: #1877f2;
  font-size: 26px;
  font-weight: 700;
  line-height: 32px;
  text-align: center;
}

.tray {
  flex: 1;
  height: 60px;
  display: flex;
  align-items: center;
  position: relative;
  padding-left: 24px;
}

.t-cloud { margin-left: 20px; }
.t-sync { margin-left: 21px; }

.t-lang {
  margin-left: 16px;
  width: 40px;
  font-size: 14px;
  line-height: 20px;
  text-align: center;
}

.t-globe { margin-left: 17px; }
.t-spk { margin-left: 9px; }
.t-bat { margin-left: 11px; }

.t-clock {
  width: 97px;
  font-size: 14.500px;
  line-height: 20px;
  text-align: right;
}

.t-notif {
  margin-left: 15px;
  width: 20px;
  height: 20px;
  border-radius: 50%;
  background: #4cc2ff;
  color: #111;
  font-size: 12px;
  line-height: 20px;
  text-align: center;
}

/* toast */
.toast {
  position: absolute;
  left: 1446px;
  top: 845px;
  width: 453px;
  height: 158px;
  padding: 18px 25px 18px 21px;
  border-radius: 8px;
  background: #2b2b2b;
  border: 1px solid #3a3a3a;
  box-shadow: 0 6px 18px rgba(0, 0, 0, .35);
  color: #fff;
}

.toast-head {
  display: flex;
  align-items: center;
  height: 18px;
}

.toast-app {
  margin-left: 10px;
  font-size: 14px;
}

.toast-more {
  margin-left: auto;
  margin-right: 37px;
  color: #ccc;
  font-weight: 700;
}

.toast-body {
  margin-top: 38px;
  display: flex;
  gap: 22px;
}

.toast-text {
  font-size: 16.200px;
  line-height: 23.500px;
  color: #c9c9c9;
  margin-top: -11px;
}

.toast-h {
  color: #fff;
  font-size: 15px;
}
```
